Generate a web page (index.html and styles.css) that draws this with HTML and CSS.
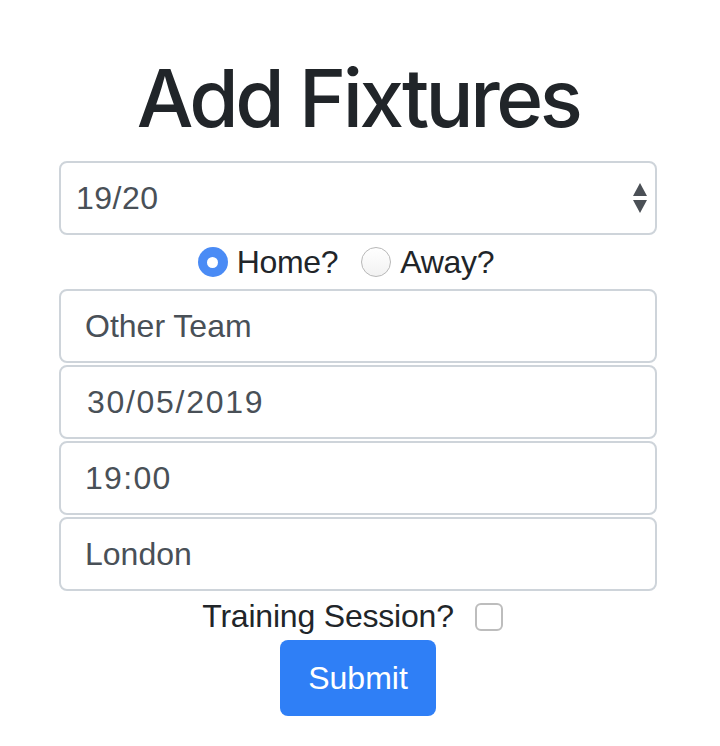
FILE: index.html
```html
<!DOCTYPE html>
<html lang="en">
<head>
<meta charset="utf-8">
<title>Add Fixtures</title>
<link rel="stylesheet" href="styles.css">
</head>
<body>
<div class="page">
  <form class="form">
    <h1 class="title">Add Fixtures</h1>
    <div class="select-box">
      <span class="select-value">19/20</span>
      <svg class="select-arrows" width="14" height="30" viewBox="0 0 14 30">
        <polygon points="7,0 14,13 0,13" fill="#4b5056"/>
        <polygon points="0,17 14,17 7,30" fill="#4b5056"/>
      </svg>
    </div>
    <div class="radio-row">
      <label class="radio-label"><span class="radio checked"></span>Home?</label>
      <label class="radio-label"><span class="radio"></span>Away?</label>
    </div>
    <div class="input">Other Team</div>
    <div class="input input-date">30/05/2019</div>
    <div class="input input-time">19:00</div>
    <div class="input">London</div>
    <div class="check-row">
      <span>Training Session?</span>
      <span class="checkbox"></span>
    </div>
    <button type="button" class="btn">Submit</button>
  </form>
</div>
</body>
</html>
```
FILE: styles.css
```css
* { box-sizing: border-box; }
body {
  margin: 0;
  background: #fff;
  font-family: "Liberation Sans", Arial, sans-serif;
  color: #212529;
}
.page {
  padding: 50px 0 0 59px;
}
.form {
  width: 598px;
  display: flex;
  flex-direction: column;
  margin: 0;
}
.title {
  margin: 0 0 15px;
  text-align: center;
  font-family: "Inter", "Liberation Sans", sans-serif;
  font-weight: 550;
  font-size: 80px;
  line-height: 96px;
  letter-spacing: -3.5px;
  color: #212529;
}
.select-box {
  height: 74px;
  border: 2px solid #ced4da;
  border-radius: 8px;
  display: flex;
  align-items: center;
  justify-content: space-between;
  padding: 0 8px 0 15px;
  font-size: 32px;
  color: #495057;
}
.select-value { letter-spacing: 0.5px; }
.select-arrows { display: block; }
.radio-row {
  height: 54px;
  display: flex;
  align-items: center;
  justify-content: center;
  gap: 23px;
  font-size: 32px;
  letter-spacing: -0.3px;
  color: #212529;
  padding-right: 24px;
}
.radio-label {
  display: flex;
  align-items: center;
  gap: 9px;
}
.radio {
  width: 30px;
  height: 30px;
  border-radius: 50%;
  border: 1px solid #b8b8b8;
  background: linear-gradient(#fff, #f2f2f2);
  display: flex;
  align-items: center;
  justify-content: center;
}
.radio.checked {
  border: none;
  background: #4a8bf5;
}
.radio.checked::after {
  content: "";
  width: 11px;
  height: 11px;
  border-radius: 50%;
  background: #fff;
}
.input {
  height: 74px;
  margin-bottom: 2px;
  border: 2px solid #ced4da;
  border-radius: 8px;
  padding: 0 24px;
  display: flex;
  align-items: center;
  font-size: 32px;
  color: #495057;
}
.input-date { padding-left: 26px; letter-spacing: 1.7px; }
.input-time { letter-spacing: 1.3px; }
.check-row {
  height: 47px;
  display: flex;
  align-items: center;
  justify-content: center;
  gap: 21px;
  font-size: 32px;
  letter-spacing: -0.2px;
  color: #212529;
  padding-right: 11px;
}
.checkbox {
  width: 28px;
  height: 28px;
  border: 2px solid #bdbdbd;
  border-radius: 6px;
  background: #fff;
}
.btn {
  align-self: center;
  width: 156px;
  height: 76px;
  border: none;
  border-radius: 8px;
  background: #2f7ff6;
  color: #fff;
  font-family: "Liberation Sans", Arial, sans-serif;
  font-size: 32px;
  padding: 0;
}
```
